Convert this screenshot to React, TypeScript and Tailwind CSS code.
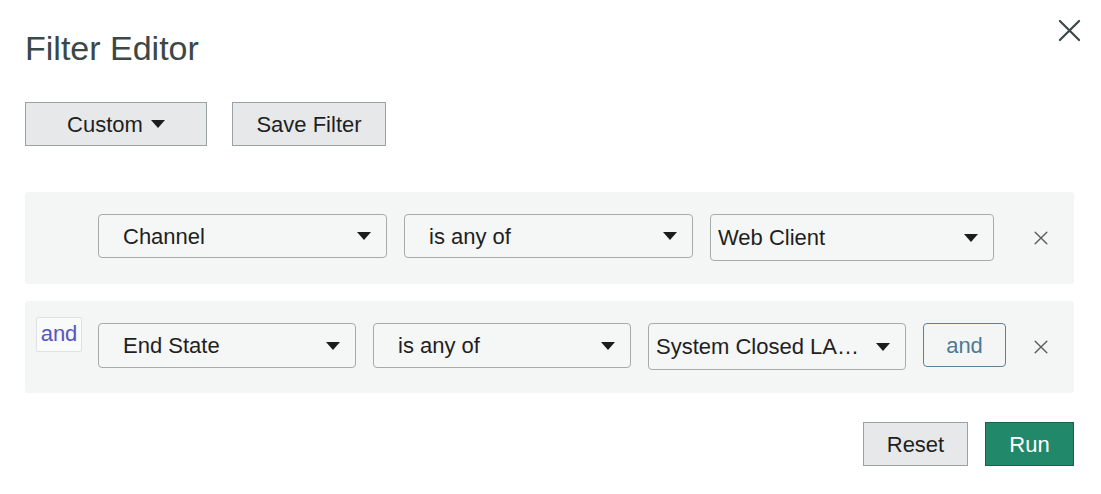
import React from 'react';

const Caret = ({ className = '' }: { className?: string }) => (
  <svg width="14" height="8" viewBox="0 0 14 8" className={className}>
    <polygon points="0,0 14,0 7,8" fill="#1c1c1c" />
  </svg>
);

const Cross = ({ size, stroke, color }: { size: number; stroke: number; color: string }) => (
  <svg width={size} height={size} viewBox="0 0 24 24" fill="none">
    <path d="M2 2 L22 22 M22 2 L2 22" stroke={color} strokeWidth={stroke} strokeLinecap="round" />
  </svg>
);

// A select-like field: label on the left, caret pinned to the right
const Field = ({ value, className }: { value: string; className: string }) => (
  <div
    className={`flex items-center rounded-[4px] border border-[#a5abab] bg-[#f5f6f6] pr-[15px] text-[22px] text-[#1f1f1f] ${className}`}
  >
    <span className="min-w-0 flex-1 truncate">{value}</span>
    <Caret className="ml-2 shrink-0" />
  </div>
);

const RemoveRow = () => (
  <button className="ml-auto mr-[26px] mt-[17px] flex h-[14px] w-[14px] items-center justify-center">
    <Cross size={14} stroke={2.3} color="#555a5a" />
  </button>
);

export default function App() {
  return (
    <div className="min-h-screen bg-white pl-[25px] pr-[27px] pt-[28px] font-['Liberation_Sans',Arial,sans-serif]">
      <div className="flex items-start justify-between">
        <h1 className="h-[40px] text-[34px] leading-[40px] text-[#3b4848]">Filter Editor</h1>
        <button className="-mr-[7px] -mt-[9px]">
          <Cross size={23} stroke={2.3} color="#3b4848" />
        </button>
      </div>

      <div className="mt-[34px] flex gap-[25px]">
        <button className="flex h-[44px] w-[182px] items-center justify-center gap-[8px] border border-[#9ba2a2] bg-[#e6e8ea] text-[22px] text-[#1f1f1f]">
          Custom
          <Caret />
        </button>
        <button className="h-[44px] w-[154px] border border-[#9ba2a2] bg-[#e6e8ea] text-[22px] text-[#1f1f1f]">
          Save Filter
        </button>
      </div>

      <div className="mt-[46px] flex flex-col gap-[17px]">
        <div className="flex h-[92px] items-start rounded-[3px] bg-[#f4f6f6] pl-[11px] pt-[22px]">
          <div className="w-[46px] shrink-0" />
          <div className="ml-[16px] flex items-start gap-[17px]">
            <Field value="Channel" className="h-[44px] w-[289px] pl-[24px]" />
            <Field value="is any of" className="h-[44px] w-[289px] pl-[24px]" />
            <Field value="Web Client" className="h-[47px] w-[284px] pl-[7px]" />
          </div>
          <RemoveRow />
        </div>

        <div className="flex h-[92px] items-start rounded-[3px] bg-[#f4f6f6] pl-[11px] pt-[22px]">
          <div className="-mt-[6px] flex h-[35px] w-[46px] shrink-0 items-center justify-center rounded-[2px] border border-[#dfe2e2] bg-[#f9fafa] pb-[2px] text-[22px] text-[#5656c4]">
            and
          </div>
          <div className="ml-[16px] flex items-start gap-[17px]">
            <Field value="End State" className="h-[45px] w-[258px] pl-[24px]" />
            <Field value="is any of" className="h-[45px] w-[258px] pl-[24px]" />
            <Field value="System Closed LA…" className="h-[47px] w-[258px] pl-[7px]" />
            <button className="h-[44px] w-[83px] rounded-[4px] border border-[#5d8298] text-[22px] text-[#4d7a94]">
              and
            </button>
          </div>
          <RemoveRow />
        </div>
      </div>

      <div className="mt-[29px] flex justify-end gap-[17px]">
        <button className="h-[44px] w-[105px] border border-[#9ba2a2] bg-[#e6e8ea] text-[22px] text-[#1f1f1f]">
          Reset
        </button>
        <button className="h-[44px] w-[89px] border border-[#17614b] bg-[#21886a] text-[22px] text-white">
          Run
        </button>
      </div>
    </div>
  );
}
